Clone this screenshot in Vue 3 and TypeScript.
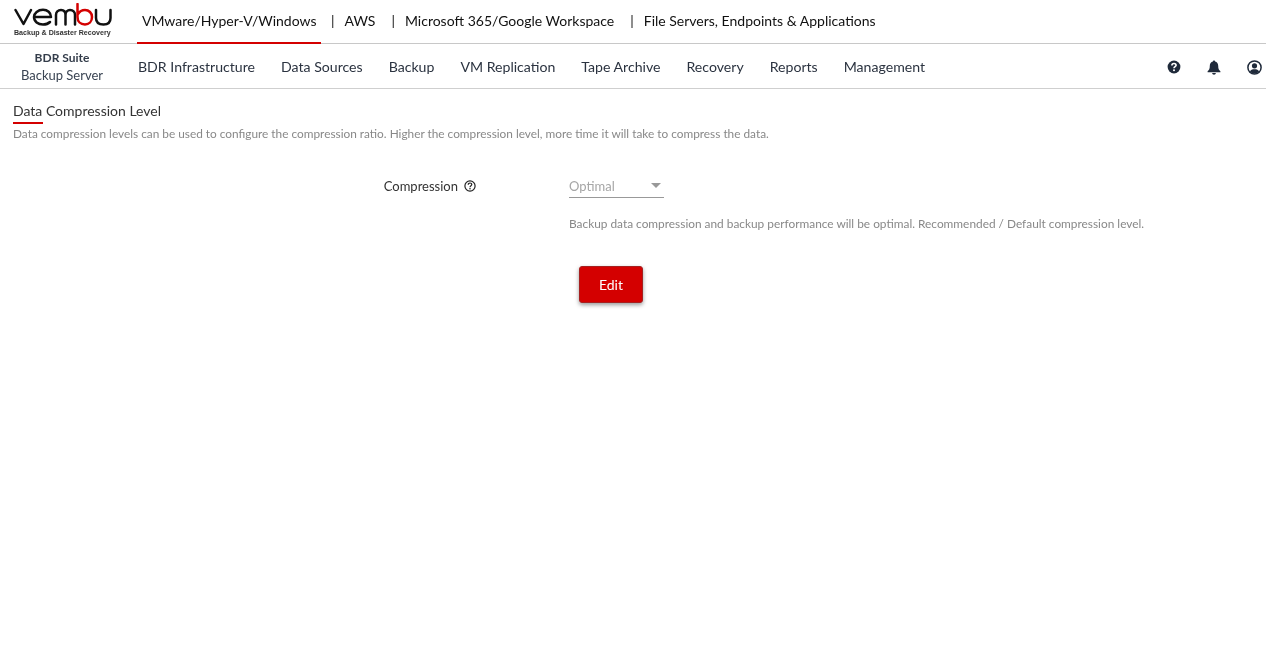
<script setup lang="ts">
const products: string[] = ['AWS', 'Microsoft 365/Google Workspace', 'File Servers, Endpoints & Applications']
const menu: string[] = ['BDR Infrastructure', 'Data Sources', 'Backup', 'VM Replication', 'Tape Archive', 'Recovery', 'Reports', 'Management']
</script>

<template>
  <div class="page">
    <header class="top">
      <div class="logo">
        <svg class="mark" width="98" height="25" viewBox="0 0 98 25" role="img" aria-label="vembu">
          <g fill="none" stroke-width="2.5" stroke-linecap="round" stroke-linejoin="round">
            <path d="M1.5 7 L9.5 21 L17 7" stroke="#111" />
            <path d="M20 14 H37 C37 9.5 33.5 6.8 29 6.8 C24 6.8 20 10 20 14 C20 18.5 24 21.5 29 21.5 C32 21.5 34.5 20.5 36 19" stroke="#111" />
            <path d="M42 21.5 V12 C42 9 44 7 47 7 C50 7 51.5 9 51.5 12 V21.5 M51.5 12 C51.5 9 53.5 7 56 7 C59 7 61 9 61 12 V21.5" stroke="#111" />
            <path d="M63.5 1 V14 C63.5 18.5 66.5 21.5 71 21.5 C75 21.5 78 18.5 78 14 C78 10 75 7 71 7 C68 7 65.5 8.5 64 11" stroke="#d40000" />
            <path d="M82 7 V15 C82 19 84.5 21.5 89.5 21.5 C94.5 21.5 96.5 19 96.5 15 V7" stroke="#111" />
          </g>
        </svg>
        <span class="tagline">Backup &amp; Disaster Recovery</span>
      </div>
      <nav class="products">
        <a class="product active">VMware/Hyper-V/Windows</a>
        <a v-for="p in products" :key="p" class="product"><span class="sep">|</span>{{ p }}</a>
      </nav>
    </header>

    <div class="bar">
      <div class="suite">
        <strong>BDR Suite</strong>
        <span>Backup Server</span>
      </div>
      <nav class="menu">
        <a v-for="m in menu" :key="m">{{ m }}</a>
      </nav>
      <div class="tools">
        <svg width="14" height="14" viewBox="0 0 14 14">
          <circle cx="7" cy="7" r="6.4" fill="#1f2a3a" />
          <path d="M4.9 5.5 C4.9 4.3 5.8 3.5 7 3.5 C8.2 3.5 9.1 4.3 9.1 5.3 C9.1 6.6 7 6.7 7 8.2" fill="none" stroke="#fff" stroke-width="1.6" />
          <circle cx="7" cy="10.2" r="1" fill="#fff" />
        </svg>
        <svg width="14" height="15" viewBox="0 0 14 15">
          <path d="M7 0.5 C7.7 0.5 8.1 1 8.1 1.6 C10 2.1 11.2 3.7 11.2 5.8 C11.2 8.8 11.9 10 13.4 11.3 V12.2 H0.6 V11.3 C2.1 10 2.8 8.8 2.8 5.8 C2.8 3.7 4 2.1 5.9 1.6 C5.9 1 6.3 0.5 7 0.5 Z" fill="#1f2a3a" />
          <path d="M5.2 13 H8.8 C8.8 14 8 14.7 7 14.7 C6 14.7 5.2 14 5.2 13 Z" fill="#1f2a3a" />
        </svg>
        <svg width="15" height="15" viewBox="0 0 15 15">
          <circle cx="7.5" cy="7.5" r="6.6" fill="#fff" stroke="#1f2a3a" stroke-width="1.5" />
          <circle cx="7.5" cy="5.8" r="2.6" fill="#1f2a3a" />
          <path d="M2.9 11.4 C3.6 9.8 5.2 9.2 7.5 9.2 C9.8 9.2 11.4 9.8 12.1 11.4 C11 12.8 9.4 13.6 7.5 13.6 C5.6 13.6 4 12.8 2.9 11.4 Z" fill="#1f2a3a" />
        </svg>
      </div>
    </div>

    <main class="content">
      <h1 class="title">Data Compression Level</h1>
      <p class="intro">Data compression levels can be used to configure the compression ratio. Higher the compression level, more time it will take to compress the data.</p>

      <div class="form">
        <div class="label">
          Compression
          <svg width="12" height="12" viewBox="0 0 12 12">
            <circle cx="6" cy="6" r="5.1" fill="none" stroke="#222" stroke-width="1.2" />
            <path d="M4.2 4.8 C4.2 3.7 5 3 6 3 C7 3 7.8 3.7 7.8 4.6 C7.8 5.7 6 5.8 6 7.2" fill="none" stroke="#222" stroke-width="1.2" />
            <circle cx="6" cy="8.8" r="0.8" fill="#222" />
          </svg>
        </div>
        <div class="field">
          <div class="select">
            <span>Optimal</span>
            <i class="caret"></i>
          </div>
          <p class="hint">Backup data compression and backup performance will be optimal. Recommended / Default compression level.</p>
          <button class="edit" type="button">Edit</button>
        </div>
      </div>
    </main>
  </div>
</template>

<style>
html, body { margin: 0; background: #fff; }
</style>

<style scoped>
.page {
  width: 1266px;
  height: 658px;
  overflow: hidden;
  font-family: Lato, "Open Sans", sans-serif;
  color: #222;
  will-change: transform;
}
.top {
  display: flex;
  height: 43px;
  border-bottom: 1px solid #c8c8c8;
}
.logo {
  width: 137px;
  flex: none;
  display: flex;
  flex-direction: column;
  padding: 3px 0 0 14px;
  box-sizing: border-box;
}
.mark { display: block; }
.tagline {
  font-family: "Liberation Sans", Arial, sans-serif;
  font-size: 7.1px;
  font-weight: 700;
  line-height: 8px;
  margin-top: 1px;
  color: #333;
  white-space: nowrap;
}
.products { display: flex; }
.product {
  display: flex;
  align-items: center;
  height: 44px;
  box-sizing: border-box;
  font-size: 14px;
  color: #111;
  white-space: nowrap;
  padding-right: 16px;
  padding-bottom: 4px;
}
.product.active {
  width: 184px;
  padding: 0 0 2px 5px;
  border-bottom: 2px solid #d40000;
  margin-right: 10px;
}
.sep { margin-right: 10px; }
.bar {
  display: flex;
  align-items: center;
  height: 44px;
  border-bottom: 1px solid #cfcfcf;
}
.suite {
  width: 124px;
  flex: none;
  display: flex;
  flex-direction: column;
  align-items: center;
  font-size: 13px;
  line-height: 16px;
  color: #3a4453;
}
.suite strong { font-size: 12px; font-weight: 700; color: #333c4a; }
.suite span { margin-top: 1px; }
.menu {
  display: flex;
  gap: 26px;
  margin-left: 14px;
  font-size: 14.12px;
  color: #2b3340;
  white-space: nowrap;
}
.tools {
  margin-left: auto;
  display: flex;
  align-items: center;
  gap: 26px;
  padding: 2px 4px 0 0;
}
.content { padding: 13px 13px 0; }
.title {
  position: relative;
  margin: 0;
  font-size: 14px;
  font-weight: 400;
  line-height: 17px;
  color: #333;
}
.title::after {
  content: "";
  position: absolute;
  left: 0;
  top: 20px;
  width: 30px;
  height: 2px;
  background: #d40000;
}
.intro {
  margin: 7px 0 0;
  font-size: 11.84px;
  line-height: 16px;
  color: #888;
}
.form {
  display: flex;
  margin-top: 34px;
}
.label {
  width: 463px;
  flex: none;
  box-sizing: border-box;
  display: flex;
  justify-content: flex-end;
  gap: 6px;
  align-items: center;
  height: 20px;
  font-size: 13px;
  color: #333;
}
.field { margin-left: 93px; }
.select {
  width: 95px;
  height: 22px;
  box-sizing: border-box;
  border-bottom: 1px solid #999;
  display: flex;
  align-items: center;
  justify-content: space-between;
  font-size: 13px;
  color: #a6a6a6;
  padding-bottom: 1px;
}
.caret {
  width: 0;
  height: 0;
  margin-right: 3px;
  margin-bottom: 2px;
  border-left: 5.5px solid transparent;
  border-right: 5.5px solid transparent;
  border-top: 5px solid #999;
}
.hint {
  margin: 18px 0 0;
  font-size: 11.86px;
  line-height: 16px;
  color: #888;
  white-space: nowrap;
}
.edit {
  display: block;
  margin: 34px 0 0 10px;
  width: 64px;
  height: 37px;
  border: 1px solid #a52020;
  border-radius: 3px;
  background: #d40000;
  color: #fff;
  font-family: inherit;
  font-size: 14px;
  box-shadow: 0 2px 4px rgba(0, 0, 0, 0.4);
}
</style>
